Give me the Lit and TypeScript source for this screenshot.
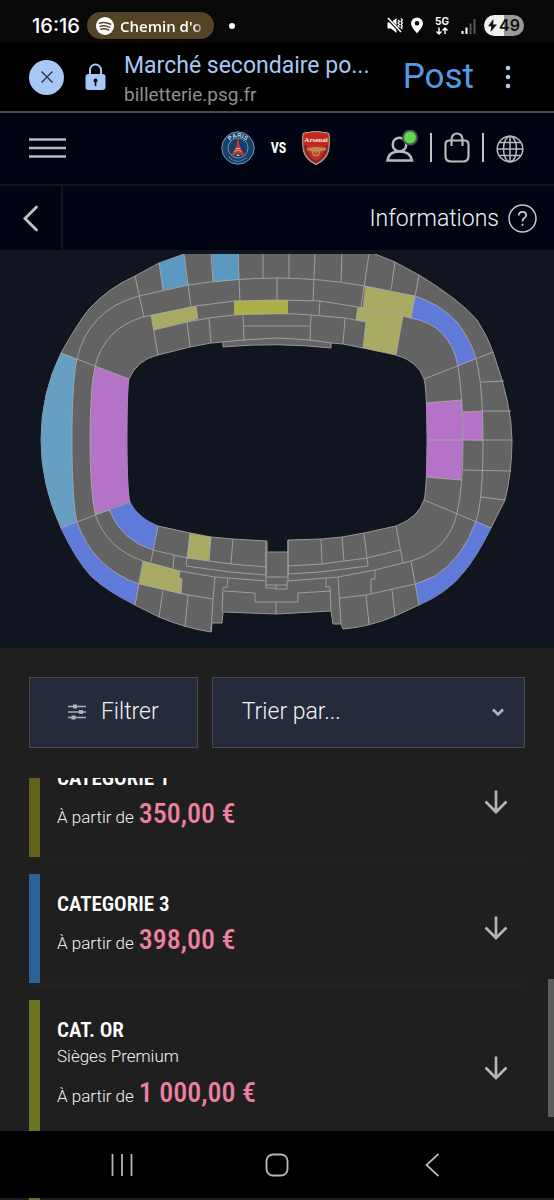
import { LitElement, html, svg, css } from "lit";
import { customElement, state } from "lit/decorators.js";
import { styleMap } from "lit/directives/style-map.js";

interface Offer {
  title: string;
  note?: string;
  price: string;
  color: string;
}

interface Zone {
  kind: string;
  points: string;
}

const OFFERS: Offer[] = [
  { title: "CATEGORIE 1", price: "350,00 €", color: "#626119" },
  { title: "CATEGORIE 3", price: "398,00 €", color: "#2a6496" },
  { title: "CAT. OR", note: "Sièges Premium", price: "1 000,00 €", color: "#6b7320" },
];

/* Whole stand: outer contour followed by the hole around the pitch. */
const STAND =
  "M184 254 159 263 135 276Q108 288 89 309 79 321 61 353 41 393 41 440 41 485 61 528 77 562 92 577 107 591 135 605L159 617Q185 628 211 632L212 623 222 623 223 612 277 614 331 611 333 624 341 624 343 629Q369 627 395 616L419 605Q447 593 463 573 476 558 491 528L505 500Q512 472 512 440 512 405 493 352 488 337 477 320 460 300 419 275L395 262 375 254 375 230 184 230Z" +
  "M127 440Q127 390 129 379 137 360 158 355L190 347 211 343 223 342 223 347Q277 342 331 348L331 343 343 344 363 348 396 355Q418 361 424 379 427 390 427 440 427 488 424 500 418 518 396 526L364 533 342 537 321 539 288 540 288 552 267 552 267 541 233 539 211 537 190 533 158 526Q137 518 130 502 127 490 127 440Z";

const ZONES: Zone[] = [
  { kind: "sky", points: "M159 263 184 254 188 285 163 290Z" },
  { kind: "sky", points: "M211 230 238 230 239 280 213 282Z" },
  { kind: "azure", points: "M61 353 77 359Q72 382 72 440 72 500 77 522L61 528Q41 485 41 440 41 393 61 353Z" },
  { kind: "purple", points: "M95 366 129 379Q127 390 127 440 127 490 130 502L95 514Q90 488 90 440 90 390 95 366Z" },
  { kind: "purple", points: "M426 403 462 400 463 440 461 480 426 477 427 440Z" },
  { kind: "purple", points: "M463 412 483 411 483 441 463 440Z" },
  { kind: "indigo", points: "M415 296Q440 304 457 322 472 342 476 359L458 366Q450 325 411 318Z" },
  { kind: "indigo", points: "M109 510 130 502Q139 518 158 526L153 550Q122 541 109 510Z" },
  { kind: "indigo", points: "M61 528 77 522Q93 568 139 584L135 605Q107 591 92 577 77 562 61 528Z" },
  { kind: "indigo", points: "M476 521 491 528Q476 558 463 573 447 593 419 605L415 584 435 576Q463 558 476 521Z" },
  { kind: "olive", points: "M151 315 196 306 198 319 154 330Z" },
  { kind: "lime", points: "M234 301 261 300 288 300 288 314 234 315Z" },
  { kind: "olive", points: "M365 286 415 296 411 318 403 316 396 355 363 348 366 322 356 320 358 307 363 307Z" },
  { kind: "olive", points: "M190 533 211 537 209 561 187 558Z" },
  { kind: "olive", points: "M143 561 180 571 179 578 182 579 181 594 139 584Z" },
];

const SEAMS: string[] = [
  /* outer tier */
  "M77 359Q88 310 139 296L188 285Q235 278 277 278 320 278 365 286L415 296Q440 304 457 322 472 342 476 359 483 385 483 440 483 500 476 521 463 558 435 576 427 580 415 584L366 595 340 598",
  "M77 359Q72 382 72 440 72 500 77 522 93 568 139 584L188 595 213 599",
  /* middle tier */
  "M95 366Q105 328 143 317L196 306 234 301Q277 299 320 301L358 307 411 318Q450 325 458 366 463 400 463 440 463 488 457 513 449 550 411 561L375 570 338 577 288 581",
  "M95 366Q90 390 90 440 90 488 95 514 106 548 143 561L180 571 215 577 266 581",
  /* inner tier */
  "M154 330 187 322 209 318 234 315Q277 312 311 315L345 318 366 322",
  "M109 510Q122 541 153 550L187 558 209 561 231 564 266 567M288 566 322 564 344 561 367 558 400 550",
  "M187 558 186 566 230 572 266 575M288 574 320 572 368 566 367 558",
  "M244 326H310M243 340 277 338 310 340M223 342 243 340M310 340 331 343",
  "M95 514 109 510",
  /* corner rays */
  "M61 353 129 379M61 528 130 502M493 352 424 379M491 528 424 500",
  /* upper tier dividers */
  "M135 276 144 317M159 263 163 290M184 254 191 307M211 254 213 282M238 254 240 302M263 254V279M289 254V279M315 254 313 301M342 254 341 282M369 254 361 307M395 262 391 290M419 275 411 318M277 278V300",
  "M151 315 158 355M196 306 198 320M187 322 190 347M209 318 211 343M243 315 244 341M311 315 310 341M345 318 343 344M320 301 319 315M358 307 356 320M366 322 363 348M403 316 396 355",
  /* right stand dividers */
  "M481 382 504 381M463 412 483 411 511 411M427 440H512M463 470 511 471M481 497 505 500M426 403 462 400M426 477 461 480",
  /* lower stand dividers */
  "M158 526 151 562M174 555 173 568M190 533 187 558M211 537 209 561M233 539 231 564M266 541V575M143 561 135 605M163 591 159 617M188 595 185 627M215 577 213 599 211 632",
  "M288 540V575M321 539 322 564M342 537 344 561M364 533 367 558M396 526 403 563M411 561 419 605M392 590 395 616M366 595 369 624M338 577 341 624",
  "M266 552V588H275M288 552V581H287V589H275M266 577H288M266 585H287M276 585V589",
  "M228 578 227 587 223 588 222 612M224 591 255 593V602H298V593L331 591M276 602V614M326 578V587H330L331 611",
  "M375 570V579H371V593M180 571 179 578 182 579 181 594",
];

@customElement("app-root")
export class AppRoot extends LitElement {
  static styles = css`
    * {
      box-sizing: border-box;
    }
    :host {
      display: flex;
      flex-direction: column;
      height: 100vh;
      overflow: hidden;
      background: #1f1f1f;
      color: #f2f2f2;
      font-family: Roboto, "Liberation Sans", sans-serif;
      font-weight: 300;
    }
    button {
      display: flex;
      align-items: center;
      justify-content: center;
      margin: 0;
      padding: 0;
      border: 0;
      background: none;
      color: inherit;
      font: inherit;
      cursor: pointer;
    }
    svg {
      display: block;
      flex: none;
    }
    .status {
      flex: none;
      display: flex;
      align-items: center;
      height: 43px;
      padding: 8px 30px 0 32px;
      background: #080808;
      color: #fff;
    }
    .clock {
      width: 55px;
      font: 500 20px/24px Inter, sans-serif;
    }
    .media {
      display: flex;
      align-items: center;
      gap: 6px;
      width: 127px;
      height: 27px;
      padding: 0 8px 0 9px;
      border-radius: 14px;
      background: #554326;
      font: 600 15px/24px "Open Sans", sans-serif;
      white-space: nowrap;
    }
    .track {
      padding-right: 4px;
      mask-image: linear-gradient(90deg, #000 85%, transparent);
    }
    .more-dot {
      width: 6px;
      height: 6px;
      margin-left: 15px;
      border-radius: 50%;
      background: #fff;
    }
    .signals {
      display: flex;
      align-items: center;
      gap: 8px;
      margin-left: auto;
    }
    .battery {
      display: flex;
      align-items: center;
      gap: 2px;
      width: 40px;
      height: 21px;
      padding-left: 4px;
      border-radius: 11px;
      background: linear-gradient(90deg, #f0f0f0 49%, #9a9a9a 49%);
      color: #111;
      font: 600 16px/21px Inter, sans-serif;
    }
    .address {
      flex: none;
      display: flex;
      align-items: center;
      height: 70px;
      padding: 0 40px 0 29px;
      border-bottom: 2px solid #4b4d52;
      background: #000;
    }
    .close {
      width: 35px;
      height: 35px;
      margin-right: 21px;
      border-radius: 50%;
      background: #a9c7f5;
    }
    .page {
      flex: 1;
      min-width: 0;
      margin-left: 18px;
      padding-top: 6px;
      font-weight: 400;
    }
    .page-title {
      color: #a9c7f5;
      font-size: 23px;
      line-height: 30px;
      white-space: nowrap;
    }
    .page-host {
      color: #8d8f93;
      font-size: 19px;
      line-height: 28px;
    }
    .post {
      margin-right: 28px;
      color: #559ae6;
      font-size: 35px;
      line-height: 42px;
      font-weight: 400;
    }
    .nav {
      flex: none;
      display: flex;
      align-items: center;
      justify-content: space-between;
      height: 73px;
      padding: 0 30px 2px 29px;
      border-bottom: 2px solid #11151f;
      background: #000412;
    }
    .match {
      display: flex;
      align-items: center;
      gap: 16px;
      margin-left: 99px;
      color: #fff;
      font: 700 14px/20px "Roboto Condensed", "Liberation Sans Narrow", sans-serif;
    }
    .tools {
      display: flex;
      align-items: center;
      gap: 12px;
    }
    .separator {
      width: 2px;
      height: 29px;
      background: #c4c4c6;
    }
    .info-bar {
      flex: none;
      display: flex;
      height: 68px;
      border-bottom: 4px solid #11151f;
      background: #000412;
    }
    .back {
      width: 63px;
      border-right: 2px solid #11151f;
    }
    .info {
      gap: 9px;
      margin-left: auto;
      padding-right: 17px;
      font-size: 23px;
    }
    .map {
      flex: none;
      background: #10151f;
    }
    .map svg {
      width: 100%;
      height: auto;
    }
    .stand {
      fill: #636363;
      fill-rule: evenodd;
      stroke: #969696;
    }
    .sky {
      fill: #5b99c2;
    }
    .azure {
      fill: #679fc4;
    }
    .purple {
      fill: #b473c6;
    }
    .indigo {
      fill: #5f7ad8;
    }
    .olive {
      fill: #a9aa63;
    }
    .lime {
      fill: #acb145;
    }
    .seam {
      fill: none;
      stroke: #a8a8a8;
      stroke-opacity: 0.85;
    }
    .controls {
      flex: none;
      display: grid;
      grid-template-columns: 35fr 65fr;
      gap: 14px;
      padding: 29px 29px 30px;
    }
    .filter,
    .sort select {
      width: 100%;
      height: 71px;
      padding-bottom: 2px;
      border: 1px solid #484b50;
      border-radius: 0;
      background: #252b3b;
      color: #f2f2f2;
      font: 300 23px/30px Roboto, sans-serif;
    }
    .filter {
      gap: 15px;
    }
    .sort {
      position: relative;
    }
    .sort select {
      appearance: none;
      padding: 0 48px 2px 29px;
    }
    .sort svg {
      position: absolute;
      top: 31px;
      right: 21px;
      pointer-events: none;
    }
    .results {
      flex: 1;
      min-height: 0;
      position: relative;
    }
    .offers {
      display: flex;
      flex-direction: column;
      gap: 17px;
      height: 100%;
      margin: 0;
      padding: 0 29px;
      overflow: hidden;
      list-style: none;
    }
    .offer {
      flex: none;
      display: flex;
      align-items: center;
      padding: 17px 13px 18px 17px;
      border-left: 11px solid;
      box-shadow: 0 4px 6px #242424;
    }
    .details {
      flex: 1;
    }
    .title {
      margin: 0;
      color: #fff;
      font: 600 21px/26px "Roboto Condensed", "Liberation Sans Narrow", sans-serif;
    }
    .note,
    .from {
      margin: 0;
      font-size: 17px;
    }
    .note {
      line-height: 27px;
    }
    .from {
      display: flex;
      align-items: baseline;
      gap: 5px;
      height: 48px;
      line-height: 48px;
    }
    .price {
      color: #ee809f;
      font: 500 28px/46px "Roboto Condensed", "Liberation Sans Narrow", sans-serif;
    }
    .expand {
      width: 32px;
      height: 32px;
    }
    .thumb {
      position: absolute;
      right: 0;
      bottom: 14px;
      width: 6px;
      height: 138px;
      background: #5c5c5c;
    }
    .system {
      flex: none;
      display: grid;
      grid-template-columns: repeat(3, 1fr);
      height: 67px;
      padding: 0 44px;
      background: #000;
    }
    .edge {
      flex: none;
      height: 2px;
      padding: 0 29px;
      background: #1f1f1f;
    }
    .edge-bar {
      width: 11px;
      height: 2px;
      background: #6b7320;
    }
  `;

  @state() private offers = OFFERS;

  firstUpdated() {
    const list = this.renderRoot.querySelector(".offers") as HTMLElement;
    list.scrollTop = 30;
  }

  private renderStatus() {
    return html`<header class="status">
      <span class="clock">16:16</span>
      <span class="media">
        <svg width="18" height="18" viewBox="0 0 18 18">
          <circle cx="9" cy="9" r="9" fill="#fff" />
          <path d="M3.6 6.2Q9 4.6 14.6 7.2M4.2 9.3Q9 8 13.6 10.3M4.8 12.2Q8.8 11.2 12.6 13" fill="none" stroke="#554326" stroke-width="1.5" stroke-linecap="round" />
        </svg>
        <span class="track">Chemin d'o</span>
      </span>
      <span class="more-dot"></span>
      <span class="signals">
        <svg width="16" height="17" viewBox="0 0 16 17" fill="none" stroke="#fff">
          <path d="M0.5 5.5H4L9.5 1V16L4 11.5H0.5Z" fill="#fff" stroke="none" />
          <path d="M0.5 1 14 15.5" stroke="#080808" stroke-width="3" />
          <path d="M1 1 14 15" stroke-width="1.6" />
          <path d="M11 3l1.5 1.5L11 6l1.5 1.5L11 9l1.5 1.5M14 1.5 15.4 3 14 4.5 15.4 6 14 7.5 15.4 9 14 10.5 15.4 12" stroke-width="1.2" />
        </svg>
        <svg width="12" height="17" viewBox="0 0 12 17">
          <path fill="#fff" fill-rule="evenodd" d="M6 0.5a6 6 0 0 1 6 6C12 10 8 13.5 6 16.5 4 13.5 0 10 0 6.5a6 6 0 0 1 6-6ZM6 4a2.3 2.3 0 1 0 0 4.6A2.3 2.3 0 0 0 6 4Z" />
        </svg>
        <svg width="22" height="20" viewBox="0 0 22 20">
          <text x="11" y="9" text-anchor="middle" font-family="Inter, sans-serif" font-weight="700" font-size="10" fill="#fff">5G</text>
          <path d="M8 11.5V18M5.5 15.5 8 18 10.5 15.5M14 18V12M11.5 14.5 14 12 16.5 14.5" fill="none" stroke="#fff" stroke-width="1.5" />
        </svg>
        <svg width="15" height="16" viewBox="0 0 15 16">
          <path d="M0.5 13h2v3h-2ZM4.5 9.5h2V16h-2Z" fill="#fff" />
          <path d="M8.5 5.5h2V16h-2ZM12.5 1h2v15h-2Z" fill="#555" />
        </svg>
        <span class="battery">
          <svg width="9" height="13" viewBox="0 0 9 13"><path d="M5.5 0 0 7.3h3.3L2.5 13 9 5.5H5.2Z" fill="#111" /></svg>
          49
        </span>
      </span>
    </header>`;
  }

  private renderAddress() {
    return html`<div class="address">
      <button class="close" aria-label="Fermer">
        <svg width="14" height="14" viewBox="0 0 14 14"><path d="M1.5 1.5 12.5 12.5M12.5 1.5 1.5 12.5" stroke="#22314d" stroke-width="1.3" /></svg>
      </button>
      <svg width="21" height="28" viewBox="0 0 21 28">
        <path d="M5 12V7a5.5 5.5 0 0 1 11 0v5" fill="none" stroke="#a9c7f5" stroke-width="2" />
        <rect x="0.5" y="11" width="20" height="16" rx="3" fill="#a9c7f5" />
        <circle cx="10.5" cy="17.5" r="2" fill="#111" />
        <path d="M9.7 18h1.6v5H9.7Z" fill="#111" />
      </svg>
      <div class="page">
        <div class="page-title">Marché secondaire po...</div>
        <div class="page-host">billetterie.psg.fr</div>
      </div>
      <button class="post">Post</button>
      <button aria-label="Plus">
        <svg width="12" height="24" viewBox="0 0 12 24" fill="#b5cbf2"><circle cx="6" cy="3" r="2.3" /><circle cx="6" cy="12" r="2.3" /><circle cx="6" cy="21" r="2.3" /></svg>
      </button>
    </div>`;
  }

  private renderNav() {
    return html`<nav class="nav">
      <button aria-label="Menu">
        <svg width="37" height="22" viewBox="0 0 37 22"><path d="M0 2.5H37M0 11H37M0 19.5H37" stroke="#b9babc" stroke-width="2.4" /></svg>
      </button>
      <div class="match">
        <svg width="34" height="34" viewBox="0 0 34 34">
          <circle cx="17" cy="17" r="16.2" fill="#12416b" stroke="#8295ae" stroke-width="1" />
          <circle cx="17" cy="17" r="10" fill="#163f68" stroke="#93a3b8" stroke-width="0.8" />
          <path id="crest-arc" d="M6.5 14A11 11 0 0 1 27.5 14" fill="none" />
          <text font-family="Liberation Sans, sans-serif" font-weight="700" font-size="6" fill="#d4dae4" text-anchor="middle"><textPath href="#crest-arc" startOffset="50%">PARIS</textPath></text>
          <path d="M16.3 8h1.4L18.5 14Q20 20 24 23.500L21 25Q17 19 13 25L10 23.500Q14 20 15.500 14Z" fill="#c5362f" />
          <path d="M14.5 17.5h5M13 21Q17 17 21 21" stroke="#d9dbe0" stroke-width="0.7" fill="none" />
          <path d="M15 25l2-2.5 2 2.5Z" fill="#c9b36a" />
          <path d="M8 26Q17 34.5 26 26" stroke="#7890ae" stroke-width="1.2" stroke-dasharray="1.5 1" fill="none" />
        </svg>
        <span>VS</span>
        <svg width="28" height="34" viewBox="0 0 28 34">
          <path d="M1 3Q3 1 7 1.5 11 0.5 14 0.5T21 1.5Q25 1 27 3 28 12 26.5 20 24 29 14 33.5 4 29 1.5 20 0 12 1 3Z" fill="#c5281f" stroke="#a3a08f" stroke-width="1.2" />
          <path d="M3 14Q5 27 14 31 23 27 25 14" fill="none" stroke="#1d3557" stroke-width="1" />
          <text x="14" y="11" text-anchor="middle" font-family="Liberation Serif, serif" font-weight="700" font-size="7" fill="#eee">Arsenal</text>
          <path d="M5 17 14 16 24 17V19L18 20.5H10L5 19Z" fill="#b98c4c" />
          <circle cx="14" cy="21" r="3.7" fill="none" stroke="#b98c4c" stroke-width="1.5" />
          <path d="M14 17v8M10 21h8" stroke="#b98c4c" stroke-width="0.9" />
        </svg>
      </div>
      <div class="tools">
        <button aria-label="Compte">
          <svg width="32" height="36" viewBox="1 0 32 36" fill="none" stroke="#b9babc" stroke-width="2.5">
            <circle cx="14.5" cy="14.5" r="6.8" />
            <path d="M2.5 30.5Q3.5 21.5 14.5 21.5T27 30.5Z" />
            <circle cx="25" cy="7.5" r="7" fill="#5ed84c" stroke="#4b5158" stroke-width="2" />
          </svg>
        </button>
        <span class="separator"></span>
        <button aria-label="Panier">
          <svg width="26" height="31" viewBox="0 0 26 31" fill="none" stroke="#b9babc" stroke-width="2.2">
            <path d="M5.5 8.5H20.500Q24.5 8.5 24.5 12.5V24Q24.5 29.5 19 29.5H7Q1.5 29.5 1.5 24V12.5Q1.5 8.5 5.5 8.5Z" />
            <path d="M7.5 14V7a5.500 5.500 0 0 1 11 0V14" />
          </svg>
        </button>
        <span class="separator"></span>
        <button aria-label="Langue">
          <svg width="28" height="32" viewBox="0 0 28 32" fill="none" stroke="#b9babc" stroke-width="1.5">
            <circle cx="14" cy="17" r="12.8" />
            <ellipse cx="14" cy="17" rx="6.5" ry="12.8" />
            <path d="M14 4V30M1 17H27M3 10.5H25M3 23.5H25" />
          </svg>
        </button>
      </div>
    </nav>`;
  }

  private renderMap() {
    return html`<section class="map" aria-label="Plan du stade">
      <svg viewBox="0 254 554 394" role="img">
        <path class="stand" d=${STAND}></path>
        ${ZONES.map((z) => svg`<path class=${z.kind} d=${z.points}></path>`)}
        ${SEAMS.map((d) => svg`<path class="seam" d=${d}></path>`)}
      </svg>
    </section>`;
  }

  private renderOffer(offer: Offer) {
    return html`<li class="offer" style=${styleMap({ borderLeftColor: offer.color })}>
      <div class="details">
        <h2 class="title">${offer.title}</h2>
        ${offer.note ? html`<p class="note">${offer.note}</p>` : null}
        <p class="from">À partir de <span class="price">${offer.price}</span></p>
      </div>
      <button class="expand" aria-label="Afficher">
        <svg width="24" height="24" viewBox="0 0 24 24"><path d="M12 0.5V22M1.5 11.5 12 22 22.5 11.5" fill="none" stroke="#b4b4b4" stroke-width="2.7" /></svg>
      </button>
    </li>`;
  }

  render() {
    return html`
      ${this.renderStatus()} ${this.renderAddress()} ${this.renderNav()}
      <div class="info-bar">
        <button class="back" aria-label="Retour">
          <svg width="16" height="27" viewBox="0 0 16 27"><path d="M13.5 2 2 13.5 13.5 25" fill="none" stroke="#c2c3c5" stroke-width="2.8" stroke-linecap="round" /></svg>
        </button>
        <button class="info">
          Informations
          <svg width="29" height="29" viewBox="0 0 29 29" fill="none" stroke="#c8c9cb">
            <circle cx="14.5" cy="14.5" r="13.5" stroke-width="1.5" />
            <path d="M10.8 11.5Q10.8 7.8 14.5 7.8T18.2 11.2Q18.2 13 16 14.3 14.5 15.3 14.5 17.5" stroke-width="1.8" />
            <circle cx="14.5" cy="20.8" r="0.7" stroke-width="1" fill="#c8c9cb" />
          </svg>
        </button>
      </div>
      ${this.renderMap()}
      <div class="controls">
        <button class="filter">
          <svg width="18" height="18" viewBox="0 0 18 18">
            <path d="M0 3.5H18M0 9H18M0 14.5H18" stroke="#aeb2ba" stroke-width="1.5" />
            <path d="M5 1.5h4v4H5ZM11 7h4v4h-4ZM3.5 12.5h4v4h-4Z" fill="#aeb2ba" />
          </svg>
          Filtrer
        </button>
        <label class="sort">
          <select aria-label="Trier par">
            <option>Trier par...</option>
          </select>
          <svg width="12" height="9" viewBox="0 0 12 9"><path d="M1 1.5 6 6.5 11 1.5" fill="none" stroke="#b5b8be" stroke-width="2.6" /></svg>
        </label>
      </div>
      <div class="results">
        <ul class="offers">
          ${this.offers.map((o) => this.renderOffer(o))}
        </ul>
        <span class="thumb"></span>
      </div>
      <footer class="system">
        <button aria-label="Applications">
          <svg width="22" height="22" viewBox="0 0 22 22"><path d="M1.5 0V22M11 0V22M20.5 0V22" stroke="#b5b5b5" stroke-width="1.8" /></svg>
        </button>
        <button aria-label="Accueil">
          <svg width="24" height="24" viewBox="0 0 24 24"><rect x="1.5" y="1.5" width="21" height="21" rx="6.5" fill="none" stroke="#b5b5b5" stroke-width="1.9" /></svg>
        </button>
        <button aria-label="Retour">
          <svg width="14" height="24" viewBox="0 0 14 24"><path d="M13.5 1 1.5 12 13.5 23" fill="none" stroke="#b5b5b5" stroke-width="1.8" /></svg>
        </button>
      </footer>
      <div class="edge"><div class="edge-bar"></div></div>
    `;
  }
}
